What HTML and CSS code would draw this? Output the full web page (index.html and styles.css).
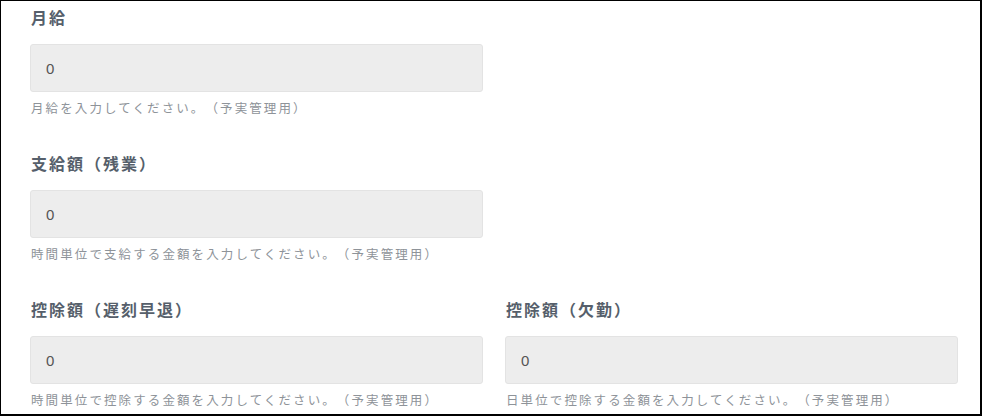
FILE: index.html
```html
<!DOCTYPE html>
<html lang="ja">
<head>
    <meta charset="UTF-8">
    <meta name="viewport" content="width=device-width, initial-scale=1.0">
    <title>給与設定</title>
    <link rel="stylesheet" href="styles.css">
</head>
<body>
    <div class="frame">
        <div class="form-grid">
            <div class="field area-salary">
                <label class="field-label" for="salary">月給</label>
                <input class="field-input" type="text" id="salary" value="0">
                <p class="field-help">月給を入力してください。（予実管理用）</p>
            </div>
            <div class="field area-overtime">
                <label class="field-label" for="overtime">支給額（残業）</label>
                <input class="field-input" type="text" id="overtime" value="0">
                <p class="field-help">時間単位で支給する金額を入力してください。（予実管理用）</p>
            </div>
            <div class="field area-late">
                <label class="field-label" for="late">控除額（遅刻早退）</label>
                <input class="field-input" type="text" id="late" value="0">
                <p class="field-help">時間単位で控除する金額を入力してください。（予実管理用）</p>
            </div>
            <div class="field area-absence">
                <label class="field-label" for="absence">控除額（欠勤）</label>
                <input class="field-input" type="text" id="absence" value="0">
                <p class="field-help">日単位で控除する金額を入力してください。（予実管理用）</p>
            </div>
        </div>
    </div>
</body>
</html>
```

FILE: styles.css
```css
html, body {
    margin: 0;
    padding: 0;
    background-color: #fff;
}
body {
    font-family: "Liberation Sans", "Noto Sans CJK JP", sans-serif;
}
.frame {
    box-sizing: border-box;
    width: 982px;
    height: 416px;
    overflow: hidden;
    border-top: 1px solid #000;
    border-left: 1px solid #000;
    border-right: 2px solid #000;
    border-bottom: 2px solid #000;
    padding: 4px 22px 0 29px;
}
.form-grid {
    display: grid;
    grid-template-columns: 1fr 1fr;
    grid-template-areas:
        "salary ."
        "overtime ."
        "late absence";
    column-gap: 22px;
    row-gap: 33px;
}
.area-salary { grid-area: salary; }
.area-overtime { grid-area: overtime; }
.area-late { grid-area: late; }
.area-absence { grid-area: absence; }
.field {
    display: flex;
    flex-direction: column;
}
.field-label {
    display: block;
    height: 24px;
    line-height: 24px;
    margin: 0 0 15px 1px;
    font-family: "Noto Sans CJK JP", sans-serif;
    font-size: 16px;
    font-weight: bold;
    letter-spacing: 2px;
    color: #565f6b;
    text-spacing-trim: space-all;
}
.field-input {
    box-sizing: border-box;
    width: 100%;
    height: 48px;
    margin: 0;
    padding: 0 15px;
    background-color: #ededed;
    border: 1px solid #e3e3e3;
    border-radius: 3px;
    font-family: "Liberation Sans", "Noto Sans CJK JP", sans-serif;
    font-size: 15px;
    color: #555;
    outline: none;
}
.field-help {
    margin: 6px 0 0 1px;
    height: 20px;
    line-height: 20px;
    font-family: "Noto Sans CJK JP", sans-serif;
    font-size: 12.5px;
    letter-spacing: 2.1px;
    color: #8e9399;
    white-space: nowrap;
    text-spacing-trim: space-all;
}
```
